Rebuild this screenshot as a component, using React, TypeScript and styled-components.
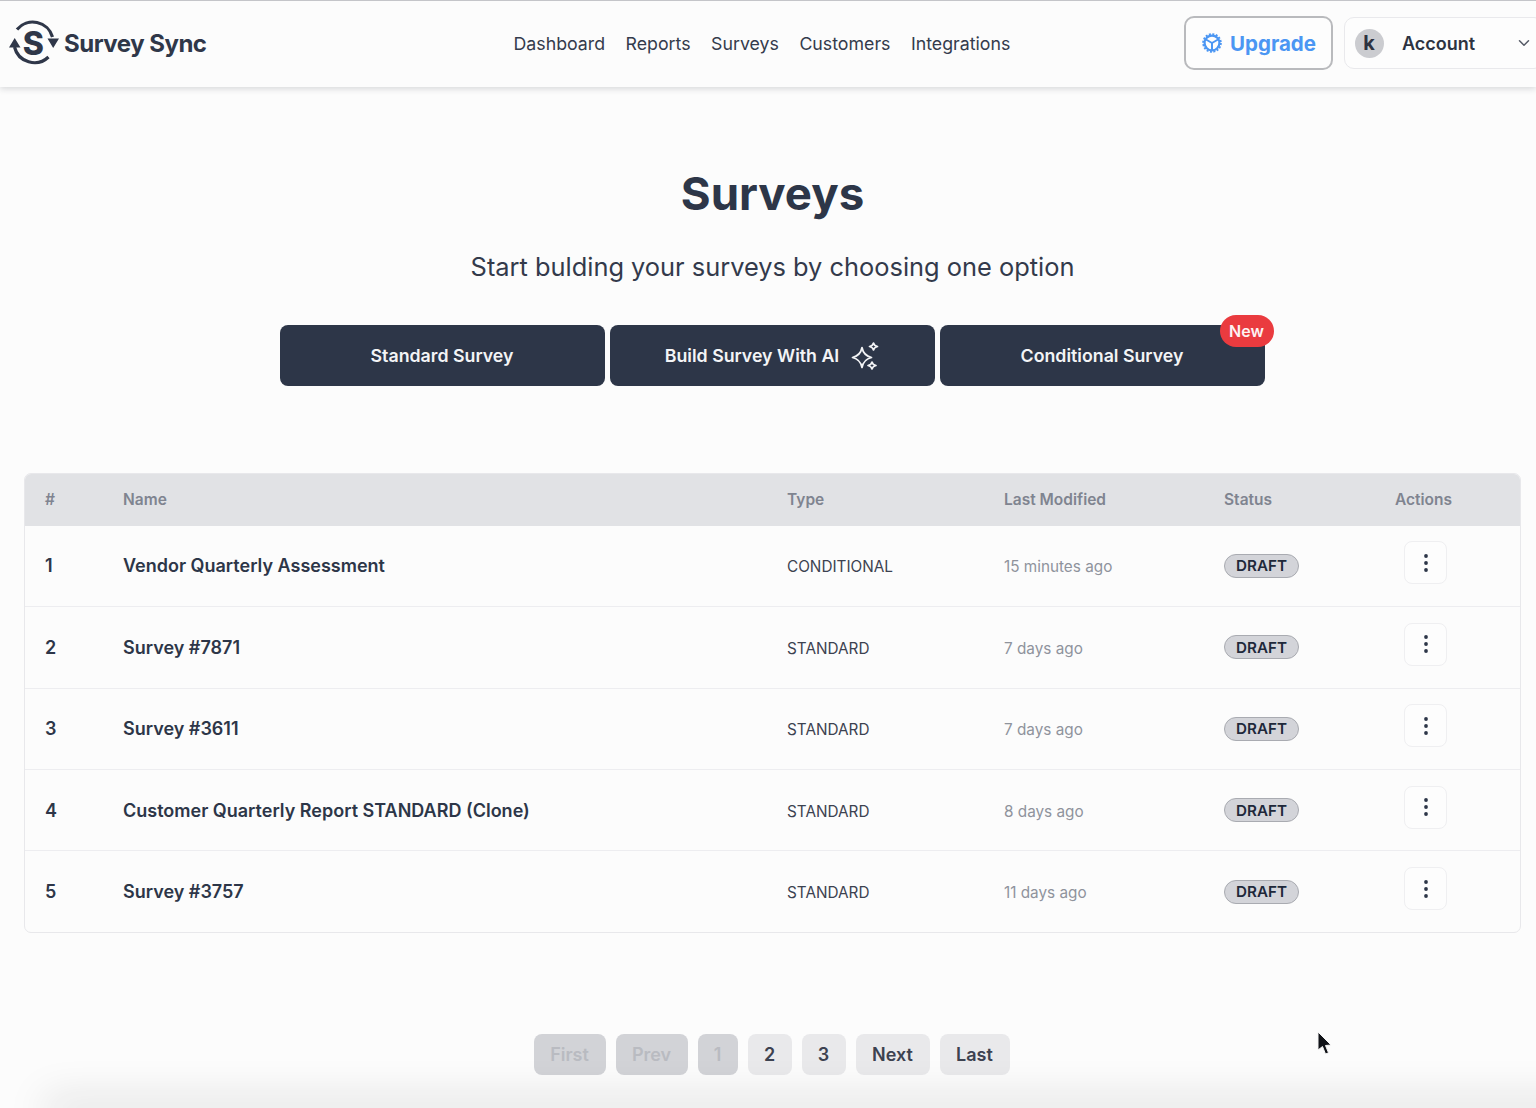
import React from "react";
import styled, { createGlobalStyle } from "styled-components";
import { ChevronDown } from "lucide-react";

const GlobalStyle = createGlobalStyle`
  html, body {
    margin: 0;
    padding: 0;
    background: #fcfcfc;
    font-family: "Inter", "Liberation Sans", sans-serif;
    color: #2d3648;
  }
  * { box-sizing: border-box; }
`;

const Page = styled.div`
  position: relative;
  width: 1536px;
  height: 1108px;
  overflow: hidden;
  background: #fcfcfc;
`;

const Header = styled.header`
  height: 87px;
  display: grid;
  grid-template-columns: 504.5px 670px auto;
  align-items: center;
  padding: 0 0 2px 9px;
  background: #fcfcfc;
  border-top: 1px solid #c4c5c9;
  box-shadow: 0 2px 6px rgba(30, 35, 50, 0.16);
  overflow: hidden;
`;

const Logo = styled.div`
  display: flex;
  align-items: center;
  gap: 5px;
  font-size: 24px;
  font-weight: 700;
  letter-spacing: -0.5px;
  color: #2f3749;
`;

const Nav = styled.nav`
  display: flex;
  gap: 20.5px;
`;

const NavLink = styled.a`
  font-size: 17.75px;
  color: #343b4c;
`;

const HeaderActions = styled.div`
  display: flex;
  align-items: center;
  gap: 11px;
  width: 360px;
`;

const UpgradeButton = styled.button`
  width: 149px;
  height: 54px;
  display: flex;
  align-items: center;
  justify-content: center;
  gap: 8px;
  padding: 0 0 0 2px;
  background: #fdfdfd;
  border: 2px solid #b9babd;
  border-radius: 10px;
  font: 700 20.5px "Inter", sans-serif;
  color: #4b96f3;
`;

const AccountButton = styled.div`
  width: 200px;
  height: 52px;
  flex: none;
  display: flex;
  align-items: center;
  padding-left: 10px;
  background: #fdfdfd;
  border: 1px solid #e9e9ec;
  border-radius: 10px;
  font-size: 18px;
  font-weight: 600;
  color: #2d3341;
`;

const Avatar = styled.span`
  width: 29px;
  height: 29px;
  border-radius: 50%;
  display: flex;
  align-items: center;
  justify-content: center;
  background: #cbccd0;
  font-size: 20px;
  font-weight: 700;
  margin-right: 18.5px;
`;

const Chevron = styled(ChevronDown)`
  margin-left: 40px;
  color: #555a66;
`;

const Main = styled.main`
  padding: 0 15px 0 24px;
  display: flex;
  flex-direction: column;
  align-items: center;
`;

const Title = styled.h1`
  margin: 75px 0 0;
  font-size: 45.6px;
  line-height: 64px;
  font-weight: 700;
  color: #2d3648;
`;

const Subtitle = styled.p`
  margin: 23px 0 0;
  font-size: 25.4px;
  line-height: 36px;
  color: #333a4b;
`;

const Options = styled.div`
  display: flex;
  gap: 5px;
  margin: 40px 1px 0 0;
`;

const OptionButton = styled.button`
  position: relative;
  width: 325px;
  height: 61px;
  display: flex;
  align-items: center;
  justify-content: center;
  gap: 12px;
  border: none;
  border-radius: 8px;
  background: #2d3648;
  color: #f3f4f6;
  font: 600 17.75px "Inter", sans-serif;
`;

const NewBadge = styled.span`
  position: absolute;
  top: -10px;
  right: -9px;
  width: 54px;
  height: 32px;
  border-radius: 16px;
  display: flex;
  align-items: center;
  justify-content: center;
  background: #ea3b3f;
  color: #fdf2f2;
  font-size: 16px;
  font-weight: 600;
`;

const TableBox = styled.div`
  width: 100%;
  margin-top: 86.5px;
  border: 1px solid #e8e8eb;
  border-radius: 7px;
  overflow: hidden;
`;

const Table = styled.table`
  width: 100%;
  border-collapse: collapse;
  table-layout: fixed;
`;

const Th = styled.th`
  height: 52px;
  padding: 0 0 1px 20px;
  background: #e1e2e5;
  text-align: left;
  font-size: 15.5px;
  font-weight: 600;
  color: #7f8490;
`;

const Row = styled.tr`
  height: 81.3px;
  border-top: 1px solid #ededf0;
  &:first-child { border-top: none; }
`;

const Td = styled.td`
  padding: 0 0 0 20px;
  font-size: 15.3px;
  color: #3c4250;
`;

const NumberCell = styled(Td)`
  font-size: 18px;
  font-weight: 600;
  color: #2d3648;
`;

const NameCell = styled(Td)`
  font-size: 18px;
  font-weight: 600;
  color: #2d3648;
`;

const TypeCell = styled(Td)`
  padding-top: 2px;
`;

const TimeCell = styled(Td)`
  padding-top: 2px;
  color: #8f939c;
`;

const StatusBadge = styled.span`
  display: inline-flex;
  align-items: center;
  justify-content: center;
  width: 75px;
  height: 24px;
  border-radius: 12px;
  background: #d3d4d9;
  border: 1px solid #a9abb1;
  font-size: 15.2px;
  font-weight: 600;
  color: #20283a;
`;

const MenuButton = styled.button`
  width: 43px;
  height: 43px;
  margin: 0 0 6px 9px;
  display: flex;
  align-items: center;
  justify-content: center;
  background: #fdfdfd;
  border: 1px solid #efeff1;
  border-radius: 8px;
  padding: 0;
`;

const Pagination = styled.div`
  display: flex;
  gap: 10px;
  margin: 101px 2px 0 0;
`;

const PageButton = styled.button<{ $w: number; $off?: boolean }>`
  width: ${(p) => p.$w}px;
  height: 41px;
  padding: 0;
  border: none;
  border-radius: 8px;
  background: ${(p) => (p.$off ? "#d2d3d7" : "#e9e9eb")};
  color: ${(p) => (p.$off ? "#b9bbc1" : "#3d4250")};
  font: 600 18px "Inter", sans-serif;
`;

// the grey fade along the bottom edge, it starts a bit in from the left
const BottomFade = styled.div`
  position: absolute;
  left: 45px;
  right: -60px;
  bottom: -24px;
  height: 24px;
  box-shadow: 0 -10px 40px rgba(20, 20, 25, 0.13);
  pointer-events: none;
`;

const Cursor = styled.svg`
  position: absolute;
  left: 1316px;
  top: 1031px;
`;

const LogoMark = () => (
  <svg width="50" height="46" viewBox="0 0 50 46" aria-hidden="true">
    <g fill="none" stroke="#2f3749" strokeWidth="3.2">
      <path d="M8 9.5 A20.5 20.5 0 0 1 43.5 17" />
      <path d="M5.5 27 A20.5 20.5 0 0 0 39.5 37" />
    </g>
    <path d="M38.5 18.5 L50 18.5 L44.2 28 Z M0 27.5 L11.5 27.5 L5.7 18 Z" fill="#2f3749" />
    <text x="24" y="35" textAnchor="middle" fontFamily="Inter, sans-serif" fontSize="32" fontWeight="800" fill="#2f3749">S</text>
  </svg>
);

const WheelIcon = () => (
  <svg width="20" height="20" viewBox="0 0 20 20" fill="none" stroke="#4b96f3" aria-hidden="true">
    <circle cx="10" cy="10" r="7.4" strokeWidth="2.2" />
    <circle cx="10" cy="10" r="8.9" strokeWidth="1.8" strokeDasharray="2 1.5" />
    <path d="M10 10V17M10 10L4 6.5M10 10L16 6.5" strokeWidth="2" />
  </svg>
);

const Sparkles = () => (
  <svg width="28" height="30" viewBox="0 0 28 30" fill="none" stroke="#f3f4f6" strokeWidth="1.7" strokeLinejoin="round" aria-hidden="true">
    <path d="M11 6.5 C12 12 14.5 15 20.5 16.5 C14.5 18 12 21 11 26.5 C10 21 7.5 18 1.5 16.5 C7.5 15 10 12 11 6.5Z" />
    <path d="M22.5 2 C23 4 23.8 5 26.5 5.5 C23.8 6 23 7 22.5 9 C22 7 21.2 6 18.5 5.5 C21.2 5 22 4 22.5 2Z" />
    <path d="M21 21 C21.5 23 22.3 24 25 24.5 C22.3 25 21.5 26 21 28 C20.5 26 19.7 25 17 24.5 C19.7 24 20.5 23 21 21Z" />
  </svg>
);

const DotsIcon = () => (
  <svg width="6" height="22" viewBox="0 0 6 22" fill="#2d3648" aria-hidden="true">
    <circle cx="3" cy="4" r="1.9" />
    <circle cx="3" cy="11" r="1.9" />
    <circle cx="3" cy="18" r="1.9" />
  </svg>
);

const surveys = [
  { id: 1, name: "Vendor Quarterly Assessment", type: "CONDITIONAL", modified: "15 minutes ago" },
  { id: 2, name: "Survey #7871", type: "STANDARD", modified: "7 days ago" },
  { id: 3, name: "Survey #3611", type: "STANDARD", modified: "7 days ago" },
  { id: 4, name: "Customer Quarterly Report STANDARD (Clone)", type: "STANDARD", modified: "8 days ago" },
  { id: 5, name: "Survey #3757", type: "STANDARD", modified: "11 days ago" },
];

const pages = [
  { label: "First", w: 72, off: true },
  { label: "Prev", w: 72, off: true },
  { label: "1", w: 40, off: true },
  { label: "2", w: 44 },
  { label: "3", w: 44 },
  { label: "Next", w: 74 },
  { label: "Last", w: 70 },
];

export default function App() {
  return (
    <Page>
      <GlobalStyle />
      <Header>
        <Logo>
          <LogoMark />
          Survey Sync
        </Logo>
        <Nav>
          <NavLink>Dashboard</NavLink>
          <NavLink>Reports</NavLink>
          <NavLink>Surveys</NavLink>
          <NavLink>Customers</NavLink>
          <NavLink>Integrations</NavLink>
        </Nav>
        <HeaderActions>
          <UpgradeButton>
            <WheelIcon />
            Upgrade
          </UpgradeButton>
          <AccountButton>
            <Avatar>k</Avatar>
            Account
            <Chevron size={18} />
          </AccountButton>
        </HeaderActions>
      </Header>
      <Main>
        <Title>Surveys</Title>
        <Subtitle>Start bulding your surveys by choosing one option</Subtitle>
        <Options>
          <OptionButton>Standard Survey</OptionButton>
          <OptionButton>
            Build Survey With AI
            <Sparkles />
          </OptionButton>
          <OptionButton>
            Conditional Survey
            <NewBadge>New</NewBadge>
          </OptionButton>
        </Options>
        <TableBox>
          <Table>
            <colgroup>
              <col style={{ width: 78 }} />
              <col style={{ width: 664 }} />
              <col style={{ width: 217 }} />
              <col style={{ width: 220 }} />
              <col style={{ width: 171 }} />
              <col />
            </colgroup>
            <thead>
              <tr>
                <Th>#</Th>
                <Th>Name</Th>
                <Th>Type</Th>
                <Th>Last Modified</Th>
                <Th>Status</Th>
                <Th>Actions</Th>
              </tr>
            </thead>
            <tbody>
              {surveys.map((s) => (
                <Row key={s.id}>
                  <NumberCell>{s.id}</NumberCell>
                  <NameCell>{s.name}</NameCell>
                  <TypeCell>{s.type}</TypeCell>
                  <TimeCell>{s.modified}</TimeCell>
                  <Td>
                    <StatusBadge>DRAFT</StatusBadge>
                  </Td>
                  <Td>
                    <MenuButton>
                      <DotsIcon />
                    </MenuButton>
                  </Td>
                </Row>
              ))}
            </tbody>
          </Table>
        </TableBox>
        <Pagination>
          {pages.map((p) => (
            <PageButton key={p.label} $w={p.w} $off={p.off}>
              {p.label}
            </PageButton>
          ))}
        </Pagination>
      </Main>
      <BottomFade />
      <Cursor width="18" height="26" viewBox="0 0 18 26" aria-hidden="true">
        <path d="M2 1 L2 19 L6.5 15.5 L9.5 23 L12.5 21.8 L9.5 14.5 L15 14 Z" fill="#111318" stroke="#f4f4f4" strokeWidth="1" />
      </Cursor>
    </Page>
  );
}
